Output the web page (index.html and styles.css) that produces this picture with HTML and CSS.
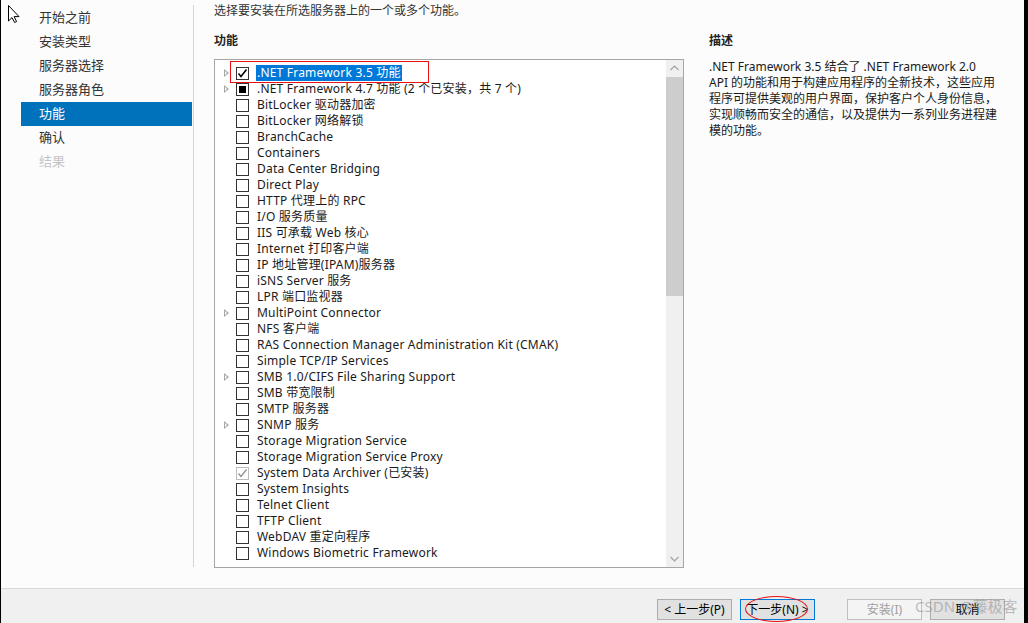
FILE: index.html
```html
<!DOCTYPE html>
<html lang="zh-CN">
<head>
<meta charset="utf-8">
<title>添加角色和功能向导</title>
<link rel="stylesheet" href="styles.css">
</head>
<body>
<div class="window">
  <div class="top">
    <nav class="nav">
      <div class="nav-item">开始之前</div>
      <div class="nav-item">安装类型</div>
      <div class="nav-item">服务器选择</div>
      <div class="nav-item">服务器角色</div>
      <div class="nav-item active">功能</div>
      <div class="nav-item">确认</div>
      <div class="nav-item disabled">结果</div>
    </nav>
    <div class="divider"></div>
    <main class="main">
      <p class="intro">选择要安装在所选服务器上的一个或多个功能。</p>
      <div class="cols">
        <section class="features">
          <h2 class="label">功能</h2>
          <div class="listbox">
            <ul class="list">
              <li class="row"><span class="exp"><i class="tri"></i></span><span class="cb checked"><svg viewBox="0 0 11 11"><path d="M1.5 5.5 L4 8.5 L9.5 1.5" /></svg></span><span class="txt sel">.NET Framework 3.5 功能</span></li>
              <li class="row"><span class="exp"><i class="tri"></i></span><span class="cb partial"><i></i></span><span class="txt">.NET Framework 4.7 功能 (2 个已安装，共 7 个)</span></li>
              <li class="row"><span class="exp"></span><span class="cb"></span><span class="txt">BitLocker 驱动器加密</span></li>
              <li class="row"><span class="exp"></span><span class="cb"></span><span class="txt">BitLocker 网络解锁</span></li>
              <li class="row"><span class="exp"></span><span class="cb"></span><span class="txt">BranchCache</span></li>
              <li class="row"><span class="exp"></span><span class="cb"></span><span class="txt">Containers</span></li>
              <li class="row"><span class="exp"></span><span class="cb"></span><span class="txt">Data Center Bridging</span></li>
              <li class="row"><span class="exp"></span><span class="cb"></span><span class="txt">Direct Play</span></li>
              <li class="row"><span class="exp"></span><span class="cb"></span><span class="txt">HTTP 代理上的 RPC</span></li>
              <li class="row"><span class="exp"></span><span class="cb"></span><span class="txt">I/O 服务质量</span></li>
              <li class="row"><span class="exp"></span><span class="cb"></span><span class="txt">IIS 可承载 Web 核心</span></li>
              <li class="row"><span class="exp"></span><span class="cb"></span><span class="txt">Internet 打印客户端</span></li>
              <li class="row"><span class="exp"></span><span class="cb"></span><span class="txt">IP 地址管理(IPAM)服务器</span></li>
              <li class="row"><span class="exp"></span><span class="cb"></span><span class="txt">iSNS Server 服务</span></li>
              <li class="row"><span class="exp"></span><span class="cb"></span><span class="txt">LPR 端口监视器</span></li>
              <li class="row"><span class="exp"><i class="tri"></i></span><span class="cb"></span><span class="txt">MultiPoint Connector</span></li>
              <li class="row"><span class="exp"></span><span class="cb"></span><span class="txt">NFS 客户端</span></li>
              <li class="row"><span class="exp"></span><span class="cb"></span><span class="txt">RAS Connection Manager Administration Kit (CMAK)</span></li>
              <li class="row"><span class="exp"></span><span class="cb"></span><span class="txt">Simple TCP/IP Services</span></li>
              <li class="row"><span class="exp"><i class="tri"></i></span><span class="cb"></span><span class="txt">SMB 1.0/CIFS File Sharing Support</span></li>
              <li class="row"><span class="exp"></span><span class="cb"></span><span class="txt">SMB 带宽限制</span></li>
              <li class="row"><span class="exp"></span><span class="cb"></span><span class="txt">SMTP 服务器</span></li>
              <li class="row"><span class="exp"><i class="tri"></i></span><span class="cb"></span><span class="txt">SNMP 服务</span></li>
              <li class="row"><span class="exp"></span><span class="cb"></span><span class="txt">Storage Migration Service</span></li>
              <li class="row"><span class="exp"></span><span class="cb"></span><span class="txt">Storage Migration Service Proxy</span></li>
              <li class="row"><span class="exp"></span><span class="cb checked dis"><svg viewBox="0 0 11 11"><path d="M1.5 5.5 L4 8.5 L9.5 1.5" /></svg></span><span class="txt">System Data Archiver (已安装)</span></li>
              <li class="row"><span class="exp"></span><span class="cb"></span><span class="txt">System Insights</span></li>
              <li class="row"><span class="exp"></span><span class="cb"></span><span class="txt">Telnet Client</span></li>
              <li class="row"><span class="exp"></span><span class="cb"></span><span class="txt">TFTP Client</span></li>
              <li class="row"><span class="exp"></span><span class="cb"></span><span class="txt">WebDAV 重定向程序</span></li>
              <li class="row"><span class="exp"></span><span class="cb"></span><span class="txt">Windows Biometric Framework</span></li>
            </ul>
            <div class="scrollbar">
              <div class="sb-btn"><svg viewBox="0 0 17 17"><path d="M4.5 10 L8.5 6 L12.5 10" /></svg></div>
              <div class="sb-thumb"></div>
              <div class="sb-track"></div>
              <div class="sb-btn"><svg viewBox="0 0 17 17"><path d="M4.5 7 L8.5 11 L12.5 7" /></svg></div>
            </div>
          </div>
        </section>
        <section class="desc">
          <h2 class="label">描述</h2>
          <p class="desc-text">.NET Framework 3.5 结合了 .NET Framework 2.0<br>API 的功能和用于构建应用程序的全新技术，这些应用<br>程序可提供美观的用户界面，保护客户个人身份信息，<br>实现顺畅而安全的通信，以及提供为一系列业务进程建<br>模的功能。</p>
        </section>
      </div>
    </main>
  </div>
  <footer class="footer">
    <button class="btn">&lt; 上一步(P)</button>
    <button class="btn primary">下一步(N) &gt;</button>
    <button class="btn disabled">安装(I)</button>
    <button class="btn">取消</button>
  </footer>

  <div class="mark-rect"></div>
  <div class="mark-ellipse"></div>
  <div class="watermark">CSDN @藤极客</div>
  <svg class="cursor" viewBox="0 0 24 24"><path d="M8.5 5.5 L8.5 21 L12 17.6 L14.6 22.5 L16.6 21.5 L14.1 16.6 L19 16.6 Z" /></svg>
</div>
</body>
</html>
```
FILE: styles.css
```css
* { box-sizing: border-box; }
html, body { margin: 0; padding: 0; }
body {
  font-family: "Noto Sans", "Noto Sans CJK SC", sans-serif;
  font-size: 12px;
  color: #1a1a1a;
  background: #000;
}
.window {
  position: relative;
  width: 1028px;
  height: 623px;
  border-left: 1px solid #000;
  border-right: 4px solid #000;
  background: #fcfcfc;
  display: flex;
  flex-direction: column;
  overflow: hidden;
}
.top {
  height: 588px;
  display: flex;
}
.nav {
  width: 192px;
  padding-top: 6px;
}
.nav-item {
  margin-left: 20px;
  width: 171px;
  height: 24px;
  line-height: 23px;
  padding-left: 18px;
  font-size: 13px;
  color: #333;
}
.nav-item.active { background: #0072bc; color: #fff; }
.nav-item.disabled { color: #c4c4c4; }
.divider {
  width: 1px;
  margin-top: 5px;
  height: 562px;
  background: #d4d4d4;
}
.main {
  flex: 1;
  padding-left: 20px;
  padding-top: 3px;
}
.intro {
  margin: 0;
  line-height: 16px;
  color: #333;
}
.cols {
  display: flex;
  gap: 25px;
  margin-top: 14px;
}
.features { width: 470px; }
.desc { width: 305px; }
.label {
  margin: 0 0 10px;
  font-size: 12px;
  line-height: 16px;
  font-weight: bold;
  color: #222;
}
.listbox {
  height: 509px;
  border: 1px solid #a6a6a6;
  background: #fff;
  display: flex;
}
.list {
  flex: 1;
  list-style: none;
  margin: 0;
  padding: 5px 0 0;
}
.row {
  height: 16px;
  display: flex;
  align-items: center;
  white-space: nowrap;
}
.exp {
  width: 21px;
  height: 16px;
  padding-left: 9px;
  display: flex;
  align-items: center;
}
.tri {
  width: 0;
  height: 0;
  border-top: 4.5px solid transparent;
  border-bottom: 4.5px solid transparent;
  border-left: 5px solid #a8a8a8;
  position: relative;
}
.tri::after {
  content: "";
  position: absolute;
  left: -4px;
  top: -2.5px;
  border-top: 2.5px solid transparent;
  border-bottom: 2.5px solid transparent;
  border-left: 2.8px solid #fff;
}
.cb {
  width: 13px;
  height: 13px;
  border: 1px solid #333;
  background: #fff;
  margin-right: 7px;
  display: flex;
  align-items: center;
  justify-content: center;
  flex: none;
}
.cb svg { width: 11px; height: 11px; }
.cb svg path { fill: none; stroke: #000; stroke-width: 1.6; }
.cb.partial i { width: 7px; height: 7px; background: #000; display: block; }
.cb.dis { border-color: #bcbcbc; }
.cb.dis svg path { stroke: #8f8f8f; stroke-width: 1.3; }
.txt {
  line-height: 16px;
  padding: 0 1px;
  letter-spacing: 0.2px;
}
.txt.sel { background: #0078d7; color: #fff; }
.scrollbar {
  width: 17px;
  display: flex;
  flex-direction: column;
  background: #f0f0f0;
}
.sb-btn { height: 17px; }
.sb-btn svg { width: 17px; height: 17px; display: block; }
.sb-btn svg path { fill: none; stroke: #a0a0a0; stroke-width: 1.1; }
.sb-thumb { height: 219px; background: #cdcdcd; }
.sb-track { flex: 1; }
.desc-text {
  margin: 0;
  line-height: 16px;
  color: #1a1a1a;
}
.footer {
  height: 35px;
  border-top: 1px solid #d9d9d9;
  background: #f0f0f0;
  display: flex;
  justify-content: flex-end;
  align-items: flex-start;
  padding: 10px 19px 0 0;
}
.btn {
  width: 75px;
  height: 21px;
  padding: 0;
  margin-left: 8px;
  font-family: inherit;
  font-size: 12px;
  color: #000;
  background: #e1e1e1;
  border: 1px solid #adadad;
  line-height: 19px;
}
.btn.primary { border-color: #0078d7; }
.btn.disabled { margin-left: 32px; background: #f4f4f4; border-color: #bfbfbf; color: #a0a0a0; }
.mark-rect {
  position: absolute;
  left: 229px;
  top: 61px;
  width: 199px;
  height: 22px;
  border: 1px solid #e81010;
}
.mark-ellipse {
  position: absolute;
  left: 744px;
  top: 596px;
  width: 63px;
  height: 26px;
  border: 1px solid #e81010;
  border-radius: 50%;
}
.watermark {
  position: absolute;
  left: 914px;
  top: 596px;
  font-size: 15px;
  line-height: 20px;
  color: rgba(140, 140, 140, 0.55);
  white-space: nowrap;
}
.cursor {
  position: absolute;
  left: -1px;
  top: 0;
  width: 24px;
  height: 24px;
}
.cursor path { fill: #fff; stroke: #000; stroke-width: 1; }
```
